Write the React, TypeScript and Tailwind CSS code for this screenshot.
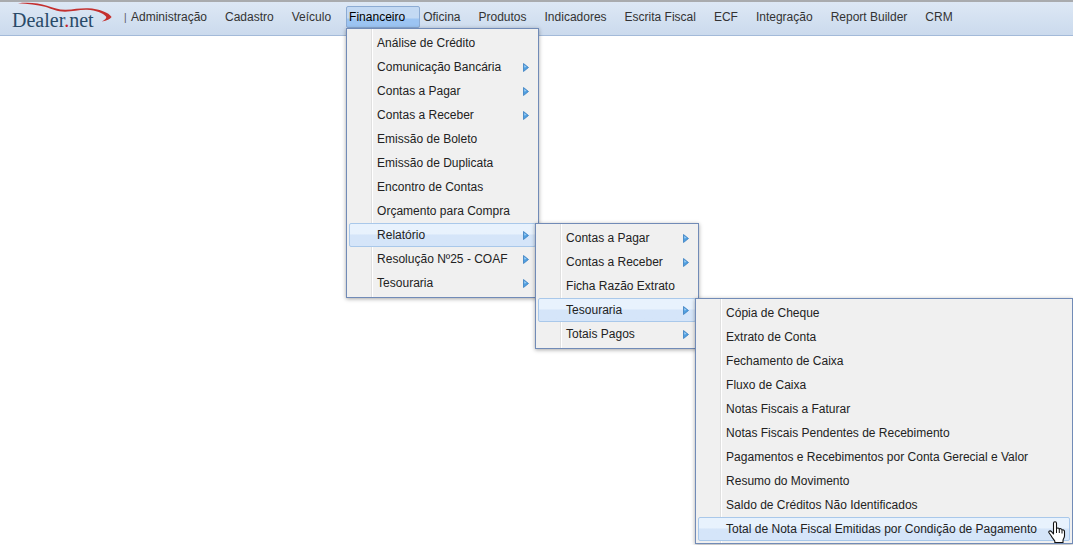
import React from 'react';
import clsx from 'clsx';

interface MenuEntry {
  label: string;
  active?: boolean;
  width?: string;
  items?: MenuEntry[];
  hasMore?: boolean;
}

const tesouraria: MenuEntry[] = [
  { label: 'Cópia de Cheque' },
  { label: 'Extrato de Conta' },
  { label: 'Fechamento de Caixa' },
  { label: 'Fluxo de Caixa' },
  { label: 'Notas Fiscais a Faturar' },
  { label: 'Notas Fiscais Pendentes de Recebimento' },
  { label: 'Pagamentos e Recebimentos por Conta Gerecial e Valor' },
  { label: 'Resumo do Movimento' },
  { label: 'Saldo de Créditos Não Identificados' },
  { label: 'Total de Nota Fiscal Emitidas por Condição de Pagamento', active: true },
];

const relatorio: MenuEntry[] = [
  { label: 'Contas a Pagar', hasMore: true },
  { label: 'Contas a Receber', hasMore: true },
  { label: 'Ficha Razão Extrato' },
  { label: 'Tesouraria', active: true, hasMore: true, width: 'w-[378px]', items: tesouraria },
  { label: 'Totais Pagos', hasMore: true },
];

const financeiro: MenuEntry[] = [
  { label: 'Análise de Crédito' },
  { label: 'Comunicação Bancária', hasMore: true },
  { label: 'Contas a Pagar', hasMore: true },
  { label: 'Contas a Receber', hasMore: true },
  { label: 'Emissão de Boleto' },
  { label: 'Emissão de Duplicata' },
  { label: 'Encontro de Contas' },
  { label: 'Orçamento para Compra' },
  { label: 'Relatório', active: true, hasMore: true, width: 'w-[164px]', items: relatorio },
  { label: 'Resolução Nº25 - COAF', hasMore: true },
  { label: 'Tesouraria', hasMore: true },
];

const menuBar: MenuEntry[] = [
  { label: 'Administração' },
  { label: 'Cadastro' },
  { label: 'Veículo' },
  { label: 'Financeiro', active: true, width: 'w-[193px]', items: financeiro },
  { label: 'Oficina' },
  { label: 'Produtos' },
  { label: 'Indicadores' },
  { label: 'Escrita Fiscal' },
  { label: 'ECF' },
  { label: 'Integração' },
  { label: 'Report Builder' },
  { label: 'CRM' },
];

const Arrow = () => (
  <svg width="6" height="9" viewBox="0 0 6 9" className="shrink-0" aria-hidden="true">
    <path d="M0.5 0.5 L5.5 4.5 L0.5 8.5 Z" fill="#4f9fe0" stroke="#3b7fc0" strokeWidth="0.8" />
    <path d="M1.3 2 L3.5 4 L1.3 4.5 Z" fill="#a5d3f7" />
  </svg>
);

const HandCursor = () => (
  <svg width="18" height="23" viewBox="0 0 18 23" className="pointer-events-none absolute top-1 right-1" aria-hidden="true">
    <path
      d="M5.5 13 V2.3 C5.5 0.3 8.5 0.3 8.5 2.3 V8 C8.8 6.5 11.2 6.8 11.3 8.3 C11.8 7.2 14 7.6 14 9.2 C14.8 8.4 16.5 9 16.5 10.6 V15 C16.5 17 15 18 15 19.5 V21.5 H6.8 V20 C5.5 18 4 16.8 3.3 15 L1 11.8 C0.3 10 2.3 9.2 3.5 10.6 Z"
      fill="#fff"
      stroke="#111"
      strokeWidth="1.1"
      strokeLinejoin="round"
    />
    <path d="M8.5 7.5 V12 M11.3 8.3 V12 M14 9.5 V12.5" stroke="#111" strokeWidth="1" fill="none" />
  </svg>
);

const Logo = () => (
  <a href="#" className="relative block w-28 shrink-0 pt-1 pl-3 font-['Liberation_Serif',serif] text-xl leading-7 text-[#294a68]">
    Dealer<span className="text-[#c4242b]">.</span>net
    <svg width="98" height="22" viewBox="0 0 98 22" className="absolute top-0 left-4" aria-hidden="true">
      <path
        d="M2 1.2 C14 0 23 1.4 31 3.8 C38 6 43 8 50 7.8 C58 7.2 64 6 72 6.2 C83 6.8 93 10.4 95.6 15 C94 17.4 91 18.6 86 19.6 C89 17.6 91 16.4 90 14.6 C87 11 80 8.4 71 7.8 C63 7.6 57 9.6 49 9.8 C41 9.8 36 6.8 29 4.8 C21 2.6 12 1.8 2 1.2 Z"
        fill="#c4302f"
      />
    </svg>
  </a>
);

const MenuItem: React.FC<{ item: MenuEntry }> = ({ item }) => (
  <li role="none" className="relative">
    <button
      type="button"
      role="menuitem"
      aria-haspopup={item.hasMore ? 'menu' : undefined}
      className={clsx(
        'flex h-6 w-full items-center justify-between rounded-xs border pr-1.5 pl-[27px] text-left whitespace-nowrap',
        item.active
          ? 'border-[#a9c8ea] bg-linear-to-b from-[#e8f2fd] from-45% to-[#d5e5f9] to-50%'
          : 'border-transparent'
      )}
    >
      {item.label}
      {item.hasMore && <Arrow />}
    </button>
    {item.items && <Menu items={item.items} width={item.width} className="top-0 left-full -ml-px" />}
    {item.active && !item.items && <HandCursor />}
  </li>
);

const Menu: React.FC<{ items: MenuEntry[]; width?: string; className: string }> = ({ items, width, className }) => (
  <ul
    role="menu"
    className={clsx(
      'absolute z-10 border border-[#718bb7] bg-[#f0f0f0] bg-linear-to-r from-[#e0e0e0] from-50% to-white to-50% bg-[length:2px_100%] bg-[position:24px_0] bg-no-repeat p-0.5 text-[#222] shadow-[0_1px_4px_rgba(0,0,0,0.35)]',
      width,
      className
    )}
  >
    {items.map((item) => (
      <MenuItem key={item.label} item={item} />
    ))}
  </ul>
);

export default function App() {
  return (
    <div className="min-h-screen bg-white font-['Liberation_Sans',Arial,sans-serif] text-[12px] leading-4">
      <header className="flex h-9 items-start border-t-2 border-b border-t-[#a9abae] border-b-[#a3bad9] bg-linear-to-b from-[#dde8f5] to-[#cbdaed]">
        <Logo />
        <nav className="flex items-start pt-1">
          <span className="w-4 pl-3 text-[10px] leading-6 text-[#555]">|</span>
          <ul role="menubar" className="flex text-[#333]">
            {menuBar.map((item) => (
              <li key={item.label} role="none" className="relative">
                <button
                  type="button"
                  role="menuitem"
                  className={clsx(
                    'block h-[22px] rounded-xs border pr-3.5 pl-0.5 whitespace-nowrap',
                    item.active
                      ? 'border-[#8cabd3] bg-linear-to-b from-[#c3d9f3] from-55% to-[#9cc4f2] to-60% text-black'
                      : 'border-transparent'
                  )}
                >
                  {item.label}
                </button>
                {item.items && <Menu items={item.items} width={item.width} className="top-full left-0" />}
              </li>
            ))}
          </ul>
        </nav>
      </header>
    </div>
  );
}
